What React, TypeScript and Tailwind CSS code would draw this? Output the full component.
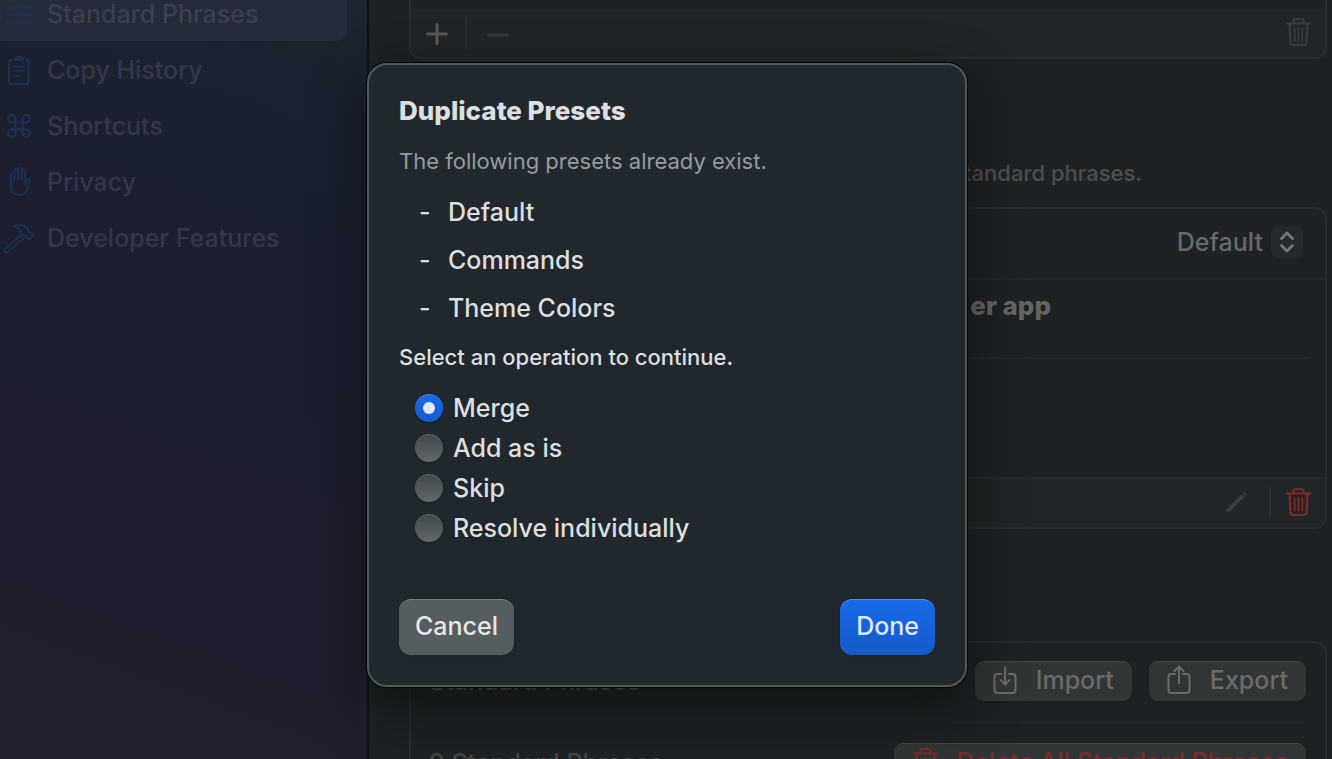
import { useState } from "react";

const stroke = {
  fill: "none",
  stroke: "currentColor",
  strokeLinecap: "round" as const,
  strokeLinejoin: "round" as const,
  "aria-hidden": true,
};

function ListIcon() {
  return (
    <svg className="h-8 w-8" viewBox="0 0 32 32" {...stroke} strokeWidth={2}>
      <path d="M10 9h18M10 17h18M10 24.500h18" />
      <path d="M4.500 9h.01M4.500 17h.01M4.500 24.500h.01" strokeWidth={3.4} />
    </svg>
  );
}

function ClipboardIcon() {
  return (
    <svg className="h-8 w-8" viewBox="0 0 32 32" {...stroke} strokeWidth={2}>
      <path d="M8.500 5.500A2.500 2.500 0 0 0 6 8v19.500A2.500 2.500 0 0 0 8.500 30H23a2.500 2.500 0 0 0 2.500-2.500V8A2.500 2.500 0 0 0 23 5.500" />
      <path d="M11.500 5.500v-1.300h2a2.300 2.300 0 0 1 4.500 0h2v1.300z" />
      <path d="M10.500 12.500h10.500M10.500 17h10.500M10.500 22h5.500" strokeWidth={1.6} />
    </svg>
  );
}

function CommandIcon() {
  return (
    <svg className="h-8 w-8" viewBox="0 0 32 32" {...stroke} strokeWidth={2}>
      <path d="M12.500 12.500h7v7h-7z" />
      <path d="M12.500 12.500H8.800a3.700 3.700 0 1 1 3.700-3.700zM19.500 12.500V8.800a3.700 3.700 0 1 1 3.700 3.700zM19.500 19.500h3.700a3.700 3.700 0 1 1-3.700 3.700zM12.500 19.500v3.700a3.700 3.700 0 1 1-3.700-3.700z" />
    </svg>
  );
}

function HandIcon() {
  return (
    <svg className="h-8 w-8" viewBox="0 0 32 32" {...stroke} strokeWidth={1.8}>
      <path d="M8 18V7.500a1.700 1.700 0 0 1 3.400 0V14.500M11.400 14.500V4.500a1.800 1.800 0 0 1 3.600 0V14M15 14V3.300a1.800 1.800 0 0 1 3.600 0V14M18.600 14V5a1.700 1.700 0 0 1 3.400 0v14" />
      <path d="M8 17v3.500c0 5.500 3.500 8.500 8 8.500 4.200 0 6.600-2 8-5.800l2.700-7.800c.8-2.300-1.700-3.200-2.600-1.400L22 19" />
    </svg>
  );
}

function HammerIcon() {
  return (
    <svg className="h-8 w-8" viewBox="0 0 32 32" {...stroke} strokeWidth={1.8}>
      <path d="M17.500 13.500 2 27.200a2 2 0 0 0 2.900 2.900L20.300 16.300" />
      <path d="M10.500 4.700c4-3 10-2.200 13 .8l1.500 1.700c.7 1 .3 2.300.6 3.200l1 .4 1-.3 2.700 2.800-4.300 4.500-2.500-2.700.2-1.300c-1-.8-2-.4-3.200 0l-3-3c.6-2.800-2.500-5.600-7-6.100z" />
    </svg>
  );
}

function TrashIcon() {
  return (
    <svg className="h-8 w-7" viewBox="0 0 28 32" {...stroke} strokeWidth={2.1}>
      <path d="M2 7.500h23M8.500 7.500V4.800a2 2 0 0 1 2-1.800h6a2 2 0 0 1 2 1.800v2.700M4.500 7.500l1 19A2.600 2.600 0 0 0 8 29h11a2.600 2.600 0 0 0 2.500-2.500l1-19" />
      <path d="M9.500 12l.3 13M13.500 12v13M17.500 12l-.3 13" strokeWidth={1.6} />
    </svg>
  );
}

function PencilIcon() {
  return (
    <svg className="h-6 w-6" viewBox="0 0 24 24" fill="currentColor" aria-hidden>
      <path d="M2 21.800 3.800 17 17.600 3.400l2.600 2.600L6.500 19.800zM18.600 2.500l1-1c1.600-1.200 3.700.8 2.500 2.500l-1 1z" />
    </svg>
  );
}

function ImportIcon() {
  return (
    <svg className="h-8 w-6" viewBox="0 0 24 32" {...stroke} strokeWidth={2}>
      <path d="M8 10H4.500a3 3 0 0 0-3 3v13a3 3 0 0 0 3 3h15a3 3 0 0 0 3-3V13a3 3 0 0 0-3-3H16M12 3.500v16M7.500 16l4.500 4.500 4.500-4.500" />
    </svg>
  );
}

function ExportIcon() {
  return (
    <svg className="h-8 w-6" viewBox="0 0 24 32" {...stroke} strokeWidth={2}>
      <path d="M8 10H4.500a3 3 0 0 0-3 3v13a3 3 0 0 0 3 3h15a3 3 0 0 0 3-3V13a3 3 0 0 0-3-3H16M12 19V2.500M7.500 7 12 2.500 16.500 7" />
    </svg>
  );
}

const navItems = [
  { label: "Standard Phrases", Icon: ListIcon },
  { label: "Copy History", Icon: ClipboardIcon },
  { label: "Shortcuts", Icon: CommandIcon },
  { label: "Privacy", Icon: HandIcon },
  { label: "Developer Features", Icon: HammerIcon },
];

const presets = ["Default", "Commands", "Theme Colors"];
const operations = ["Merge", "Add as is", "Skip", "Resolve individually"];

function Sidebar() {
  return (
    <nav className="w-[369px] shrink-0 border-r-2 border-[#0f1011] bg-linear-[200deg,#1c2530_0%,#1b1f2f_32%,#1f1f2f_60%,#231f2e_100%] pr-5">
      <ul className="-mt-[14px]">
        {navItems.map(({ label, Icon }, i) => (
          <li key={label}>
            <a
              href="#"
              aria-current={i === 0 ? "page" : undefined}
              className={
                i === 0
                  ? "mb-px flex h-[55px] items-center gap-[12px] rounded-r-[10px] bg-[#262b39] pl-[3px] text-[#3c404e]"
                  : "flex h-14 items-center gap-[12px] pl-[3px] text-[#343647]"
              }
            >
              <span className="text-[#1b3156]">
                <Icon />
              </span>
              <span>{label}</span>
            </a>
          </li>
        ))}
      </ul>
    </nav>
  );
}

function Panels() {
  const button =
    "flex h-10 items-center rounded-[9px] border-t border-[#464747] bg-[#323536] px-[18px] pb-[3px] shadow-sm";
  return (
    <main className="min-w-0 flex-1 pr-[5px] pl-10">
      <section className="flex h-[59px] flex-col overflow-hidden rounded-b-xl border-x-2 border-b-2 border-[#292d2f]">
        <div className="mt-[9px] flex flex-1 items-center border-t-2 border-[#24282a] bg-[#222527] pr-3 pb-px pl-[14px]">
          <button aria-label="Add" className="text-[#57595b]">
            <svg className="h-6 w-6" viewBox="0 0 24 24" {...stroke} strokeWidth={2.8}>
              <path d="M2.500 12h19M12 2.500v19" />
            </svg>
          </button>
          <span className="mr-[15px] ml-4 h-8 w-[2px] bg-[#282b2d]" />
          <button aria-label="Remove" className="ml-1 text-[#36393b]">
            <svg className="h-6 w-6" viewBox="0 0 24 24" {...stroke} strokeWidth={2.8}>
              <path d="M2.500 13h19" />
            </svg>
          </button>
          <button aria-label="Delete list" className="ml-auto pb-[3px] text-[#393b3d]">
            <TrashIcon />
          </button>
        </div>
      </section>

      <p className="mt-[98px] pr-[185px] text-right text-[22px] leading-8 text-[#4c4f50]">
        standard phrases.
      </p>

      <section className="mt-[18px] overflow-hidden rounded-xl border-2 border-[#282c2e]">
        <div className="flex h-[71px] items-center justify-end gap-2 border-b-2 border-[#24282a] pr-[22px] pb-[3px] text-[#68696a]">
          <span>Default</span>
          <button
            aria-label="Choose preset"
            className="flex h-8 w-8 items-center justify-center rounded-lg bg-[#26292b] text-[#777879]"
          >
            <svg className="h-6 w-4" viewBox="0 0 16 24" {...stroke} strokeWidth={2.8}>
              <path d="M2.500 8.500 8 3l5.500 5.500M2.500 15.500 8 21l5.500-5.500" />
            </svg>
          </button>
        </div>
        <div className="mr-[18px] ml-5 h-[79px] border-b-2 border-[#24282a] pt-[10px] pr-[256px] text-right text-[26px] font-extrabold text-[#646564]">
          er app
        </div>
        <div className="h-[118px]" />
        <div className="flex h-[50px] items-center justify-end border-t-2 border-[#24282a] bg-[#222527] pr-3">
          <button aria-label="Edit" className="text-[#3a3c3e]">
            <PencilIcon />
          </button>
          <span className="mr-[14px] ml-[21px] h-8 w-[2px] bg-[#2b2e30]" />
          <button aria-label="Delete" className="pb-[3px] text-[#7d2b28]">
            <TrashIcon />
          </button>
        </div>
      </section>

      <section className="mt-28 rounded-t-xl border-2 border-[#282c2e] pr-[19px] pl-[18px] text-[#444647]">
        <div className="flex h-[80px] items-center justify-between border-b-2 border-[#222527] pb-[3px]">
          <span>Standard Phrases</span>
          <div className="flex gap-[17px] text-[#6a6b6c]">
            <button className={`${button} gap-[19px]`}>
              <ImportIcon />
              Import
            </button>
            <button className={`${button} gap-[19px]`}>
              <ExportIcon />
              Export
            </button>
          </div>
        </div>
        <div className="flex h-[80px] items-center justify-between">
          <span>9 Standard Phrases</span>
          <button className={`${button} gap-4 text-[#7d2b28]`}>
            <TrashIcon />
            Delete All Standard Phrases
          </button>
        </div>
      </section>
    </main>
  );
}

function DuplicateDialog() {
  const [choice, setChoice] = useState("Merge");
  return (
    <div className="absolute inset-0 flex items-start justify-center pt-[63px] pl-[2px]">
      <div
        role="dialog"
        aria-labelledby="dialog-title"
        className="w-[600px] rounded-[20px] border-2 border-[#50585b] bg-[#20282d] p-[30px] text-[#dedfe0] shadow-[0_0_0_1px_#050606,0_20px_50px_8px_rgba(0,0,0,0.4)]"
      >
        <h1 id="dialog-title" className="text-[26px] leading-8 font-extrabold">
          Duplicate Presets
        </h1>
        <p className="mt-[18px] text-[22px] leading-8 font-normal text-[#969b9e]">
          The following presets already exist.
        </p>
        <ul className="mt-[11px] leading-[48px]">
          {presets.map((name) => (
            <li key={name} className="flex pl-5">
              <span className="w-[29px]">-</span>
              {name}
            </li>
          ))}
        </ul>
        <fieldset>
          <legend className="pt-[9px] text-[22px] leading-8">
            Select an operation to continue.
          </legend>
          <div className="mt-[15px] pl-4 leading-10">
            {operations.map((name) => (
              <label key={name} className="flex items-center gap-[10px]">
                <input
                  type="radio"
                  name="operation"
                  checked={choice === name}
                  onChange={() => setChoice(name)}
                  className="flex h-7 w-7 appearance-none items-center justify-center rounded-full bg-linear-to-b from-[#41484b] to-[#606669] shadow-[inset_0_1px_0_rgba(255,255,255,0.15),0_1px_2px_rgba(0,0,0,0.4)] before:h-3 before:w-3 before:rounded-full checked:from-[#1869ea] checked:to-[#155bcb] checked:before:bg-[#dfe8f8]"
                />
                {name}
              </label>
            ))}
          </div>
        </fieldset>
        <div className="mt-[51px] flex justify-between">
          <button className="h-14 rounded-xl border-t border-[#7b8183] bg-[#565d60] px-4 pb-1 text-[#e6e7e7] shadow-sm">
            Cancel
          </button>
          <button className="h-14 rounded-xl border-t border-[#4f8cf0] bg-linear-to-b from-[#186aea] to-[#155ac9] px-4 pb-1 text-[#dfe8f8] shadow-sm">
            Done
          </button>
        </div>
      </div>
    </div>
  );
}

export default function App() {
  return (
    <div className="relative flex h-screen overflow-hidden bg-[#1e2224] font-['Inter',sans-serif] text-[25px] leading-8 font-medium whitespace-nowrap">
      <Sidebar />
      <Panels />
      <DuplicateDialog />
    </div>
  );
}
